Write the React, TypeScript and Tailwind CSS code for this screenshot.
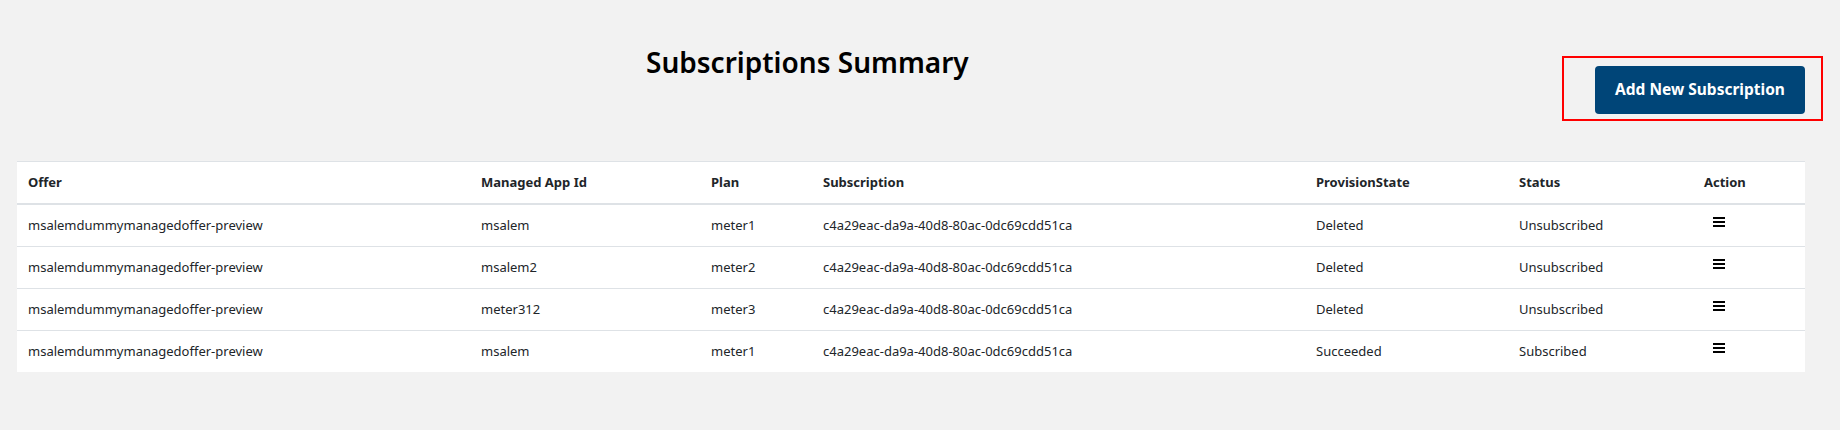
import React from "react";

const rows = [
  { offer: "msalemdummymanagedoffer-preview", app: "msalem", plan: "meter1", sub: "c4a29eac-da9a-40d8-80ac-0dc69cdd51ca", state: "Deleted", status: "Unsubscribed" },
  { offer: "msalemdummymanagedoffer-preview", app: "msalem2", plan: "meter2", sub: "c4a29eac-da9a-40d8-80ac-0dc69cdd51ca", state: "Deleted", status: "Unsubscribed" },
  { offer: "msalemdummymanagedoffer-preview", app: "meter312", plan: "meter3", sub: "c4a29eac-da9a-40d8-80ac-0dc69cdd51ca", state: "Deleted", status: "Unsubscribed" },
  { offer: "msalemdummymanagedoffer-preview", app: "msalem", plan: "meter1", sub: "c4a29eac-da9a-40d8-80ac-0dc69cdd51ca", state: "Succeeded", status: "Subscribed" },
];

const grid = "grid grid-cols-[453px_230px_112px_493px_203px_185px_112px]";

function Bars() {
  return (
    <svg width="12" height="10" viewBox="0 0 12 10" className="block">
      <rect x="0" y="0" width="12" height="2" fill="#000" />
      <rect x="0" y="4" width="12" height="2" fill="#000" />
      <rect x="0" y="8" width="12" height="2" fill="#000" />
    </svg>
  );
}

export default function App() {
  return (
    <div className="w-full min-h-[430px] bg-[#f2f2f2] font-['Noto_Sans',sans-serif] text-[#212529]">
      <div className="flex items-start h-[161px] pl-[17px] pr-[35px]">
        <div className="flex-1 pl-[629px] pt-[42px]">
          <h1 className="text-[28px] leading-[40px] font-semibold text-black">Subscriptions Summary</h1>
        </div>
        <div className="relative mt-[66px]">
          <button className="h-[48px] w-[210px] rounded-[4px] bg-[#004578] text-white text-[15.5px] font-bold">
            Add New Subscription
          </button>
          <div className="absolute left-[-33px] top-[-10px] w-[261px] h-[65px] border-2 border-[#ff0000] pointer-events-none" />
        </div>
      </div>
      <div className="ml-[17px] w-[1788px] bg-white text-[13px]">
        <div className={`${grid} h-[44px] border-t border-b-2 border-[#dee2e6] font-bold`}>
          {["Offer", "Managed App Id", "Plan", "Subscription", "ProvisionState", "Status"].map((h) => (
            <div key={h} className="flex items-center pl-[11px]">{h}</div>
          ))}
          <div className="flex items-center pl-[11px]">Action</div>
        </div>
        {rows.map((r, i) => (
          <div key={i} className={`${grid} ${i < rows.length - 1 ? "h-[42px] border-b border-[#dee2e6]" : "h-[41px]"}`}>
            <div className="flex items-center pl-[11px]">{r.offer}</div>
            <div className="flex items-center pl-[11px]">{r.app}</div>
            <div className="flex items-center pl-[11px]">{r.plan}</div>
            <div className="flex items-center pl-[11px]">{r.sub}</div>
            <div className="flex items-center pl-[11px]">{r.state}</div>
            <div className="flex items-center pl-[11px]">{r.status}</div>
            <div className="pl-[20px] pt-[12px]"><Bars /></div>
          </div>
        ))}
      </div>
    </div>
  );
}
